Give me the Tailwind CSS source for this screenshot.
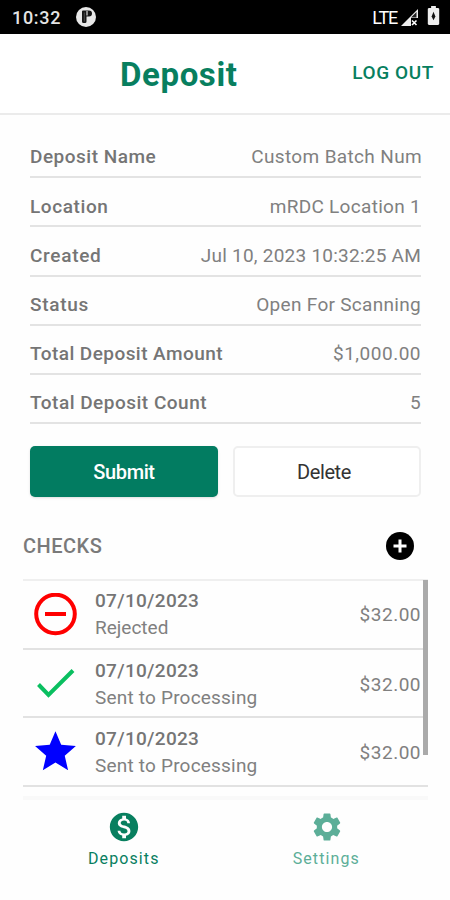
<!DOCTYPE html>
<html lang="en">
<head>
<meta charset="utf-8">
<title>Deposit</title>
<script src="https://cdn.jsdelivr.net/npm/@tailwindcss/browser@4"></script>
</head>
<body class="bg-[#fefefe] font-[Roboto,sans-serif]">
<div class="w-[450px] h-[900px] overflow-hidden flex flex-col text-[#757575] whitespace-nowrap">
  <header class="h-[34px] shrink-0 bg-black flex items-center pl-3 pr-[10px] text-[#e4e4e4]">
    <span class="w-[50px] text-[18px] font-medium tracking-[0.7px]">10:32</span>
    <svg class="ml-[14px] size-5" viewBox="0 0 20 20"><circle cx="10" cy="10" r="10" fill="#e8e8e8"/><path d="M6 4.500Q6 3.500 7 3.500H13Q16 3.500 16 6.500T13 9.500H10.500V14.500Q10.500 16 9 16H7.500Q6 16 6 14.500Z" fill="#161616"/><path d="M8.300 5.500v9" stroke="#555" stroke-width="0.800"/><path d="M11 4v4.500" stroke="#ddd" stroke-width="1.200"/></svg>
    <span class="ml-auto text-[18px] tracking-[-1.2px] text-white">LTE</span>
    <svg class="ml-[3px] w-[19px] h-[19px]" viewBox="0 0 19 19"><path d="M1 18 18 1V10H11V18Z" fill="#eee"/><path d="M11 9.500 16.500 4V9.500Z" fill="#222"/><path d="m12 12.500 4.500 4.500m0-4.500-4.500 4.500" stroke="white" stroke-width="1.600"/></svg>
    <svg class="ml-[8px] mb-[3px] w-[13px] h-[19px]" viewBox="0 0 12 20"><path d="M3.500 0h5v2H11l1 1v16l-1 1H1l-1-1V3l1-1h2.500Z" fill="#eee"/><path d="M6 6 4 11 6 15l2-4Z" fill="#111"/></svg>
  </header>
  <div class="h-[81px] shrink-0 bg-white border-b-2 border-[#ebebeb] relative flex items-center justify-end pr-[16px] text-[#087f5f]">
    <h1 class="absolute left-[120px] top-[16px] text-[33px] leading-[50px] font-bold tracking-[0.6px]">Deposit</h1>
    <span class="text-[19px] font-medium tracking-[0.6px]">LOG OUT</span>
  </div>
  <dl class="mt-[14px] ml-[30px] w-[391px] text-[19px] shrink-0 tracking-[0.3px]">
    <div class="h-[49.200px] pt-[10px] border-b-2 border-[#e3e3e3] flex items-center justify-between"><dt class="font-medium tracking-[0.5px]">Deposit Name</dt><dd class="text-[#808080] -mr-px tracking-[0.35px]">Custom Batch Num</dd></div>
    <div class="h-[49.200px] pt-[10px] border-b-2 border-[#e3e3e3] flex items-center justify-between"><dt class="font-medium tracking-[0.6px]">Location</dt><dd class="text-[#808080]">mRDC Location 1</dd></div>
    <div class="h-[49.200px] pt-[10px] border-b-2 border-[#e3e3e3] flex items-center justify-between"><dt class="font-medium tracking-[0.7px]">Created</dt><dd class="text-[#808080] tracking-[0.24px]">Jul 10, 2023 10:32:25 AM</dd></div>
    <div class="h-[49.200px] pt-[10px] border-b-2 border-[#e3e3e3] flex items-center justify-between"><dt class="font-medium tracking-[0.7px]">Status</dt><dd class="text-[#808080]">Open For Scanning</dd></div>
    <div class="h-[49.200px] pt-[10px] border-b-2 border-[#e3e3e3] flex items-center justify-between"><dt class="font-medium tracking-[0.44px]">Total Deposit Amount</dt><dd class="text-[#808080] tracking-[0.5px]">$1,000.00</dd></div>
    <div class="h-[49.200px] pt-[10px] border-b-2 border-[#e3e3e3] flex items-center justify-between"><dt class="font-medium tracking-[0.5px]">Total Deposit Count</dt><dd class="text-[#808080]">5</dd></div>
  </dl>
  <div class="mt-[22px] ml-[30px] w-[391px] h-[51px] shrink-0 grid grid-cols-2 gap-[15px] text-[20px]">
    <button class="rounded-[5px] bg-[#027c61] text-white shadow-sm font-medium tracking-[-0.4px] pt-px">Submit</button>
    <button class="rounded-[5px] bg-white border-2 border-[#efefef] text-[#333] tracking-[-0.4px] pr-[6px]">Delete</button>
  </div>
  <div class="h-[82px] shrink-0 pl-[23px] pr-[36px] pt-[16px] flex items-center justify-between">
    <h2 class="text-[20px] font-medium text-[#7a7a7a] tracking-[0.5px]">CHECKS</h2>
    <svg class="size-7" viewBox="0 0 28 28"><circle cx="14" cy="14" r="14" fill="#000"/><path d="M14 7.500v13M7.500 14h13" stroke="#fff" stroke-width="3"/></svg>
  </div>
  <div class="relative ml-[23px] w-[405px] h-[221px] shrink-0 border-t-2 border-[#efefef] border-b-4 border-b-[#f9f9f9]">
    <div class="h-[68.500px] border-b-2 border-[#e2e2e2] flex items-center pl-[11px] pr-[7px]">
      <svg class="size-[43px]" viewBox="0 0 43 43" fill="none" stroke="#f00" stroke-width="4"><circle cx="21.500" cy="21" r="19.300"/><path d="M11 21h21"/></svg>
      <div class="ml-[18px] leading-[27px] text-[19px]"><p class="font-medium tracking-[0.3px]">07/10/2023</p><p class="text-[#808080]">Rejected</p></div><span class="ml-auto pt-[2px] text-[19px] tracking-[0.5px] text-[#808080]">$32.00</span>
    </div>
    <div class="h-[68.500px] pt-[2px] border-b-2 border-[#e2e2e2] flex items-center pl-[11px] pr-[7px]">
      <svg class="size-[43px]" viewBox="0 0 43 43" fill="none" stroke="#0abf60" stroke-width="4"><path d="M4.500 22.500 14.500 33 39 8.500"/></svg>
      <div class="ml-[18px] leading-[27px] text-[19px]"><p class="font-medium tracking-[0.3px]">07/10/2023</p><p class="text-[#808080] tracking-[0.2px]">Sent to Processing</p></div><span class="ml-auto pt-[2px] text-[19px] tracking-[0.5px] text-[#808080]">$32.00</span>
    </div>
    <div class="h-[68.500px] pt-[2px] border-b-2 border-[#e2e2e2] flex items-center pl-[11px] pr-[7px]">
      <svg class="size-[43px]" viewBox="0 0 24 24" fill="#00f"><path d="M12 17.270 18.180 21l-1.640-7.030L22 9.240l-7.190-.610L12 2 9.190 8.630 2 9.240l5.460 4.730L5.820 21z" transform="translate(-1.700 -2.100) scale(1.140)"/></svg>
      <div class="ml-[18px] leading-[27px] text-[19px]"><p class="font-medium tracking-[0.3px]">07/10/2023</p><p class="text-[#808080] tracking-[0.2px]">Sent to Processing</p></div><span class="ml-auto pt-[2px] text-[19px] tracking-[0.5px] text-[#808080]">$32.00</span>
    </div>
    <div class="absolute right-0 top-[-1px] w-[5px] h-[175px] bg-[#aaa]"></div>
  </div>
  <nav class="h-[98px] ml-[23px] w-[405px] grid grid-cols-2 text-[16px] text-[#087f5f]">
    <div class="flex flex-col items-center pt-[10px]">
      <svg class="size-[34px]" viewBox="0 0 24 24" fill="currentColor"><path d="M12 2C6.480 2 2 6.480 2 12s4.480 10 10 10 10-4.480 10-10S17.520 2 12 2zm1.410 16.090V20h-2.670v-1.930c-1.710-.360-3.160-1.460-3.270-3.400h1.960c.1 1.050.820 1.870 2.650 1.870 1.960 0 2.400-.980 2.400-1.590 0-.830-.440-1.610-2.670-2.140-2.480-.6-4.180-1.620-4.180-3.670 0-1.720 1.390-2.840 3.110-3.210V4h2.670v1.950c1.860.450 2.790 1.860 2.850 3.390H14.300c-.050-1.110-.640-1.870-2.220-1.870-1.500 0-2.400.680-2.400 1.640 0 .840.650 1.390 2.670 1.910s4.180 1.390 4.180 3.910c-.010 1.830-1.380 2.830-3.120 3.160z"/></svg>
      <span class="mt-[3px] pr-[1px] tracking-[1.1px]">Deposits</span>
    </div>
    <div class="flex flex-col items-center pt-[10px] text-[#5cae98]">
      <svg class="size-[34px]" viewBox="0 0 24 24" fill="currentColor"><path d="M19.140 12.940c.040-.3.060-.610.060-.940 0-.320-.020-.640-.070-.940l2.030-1.580c.180-.140.230-.410.120-.610l-1.920-3.320c-.120-.220-.370-.290-.590-.220l-2.390.960c-.5-.380-1.030-.7-1.620-.940l-.360-2.540c-.040-.240-.240-.410-.480-.410h-3.840c-.240 0-.430.170-.470.410l-.360 2.540c-.590.240-1.130.570-1.620.940l-2.390-.960c-.220-.080-.470 0-.590.220L2.740 8.870c-.120.210-.080.470.120.610l2.030 1.580c-.050.3-.090.630-.090.940s.020.640.070.940l-2.030 1.580c-.180.140-.230.410-.120.610l1.920 3.320c.120.220.370.290.590.220l2.390-.960c.5.380 1.030.7 1.620.940l.360 2.540c.050.240.240.410.480.410h3.840c.240 0 .440-.170.470-.410l.360-2.540c.590-.240 1.130-.560 1.620-.940l2.390.960c.220.080.470 0 .590-.220l1.920-3.320c.120-.220.070-.470-.120-.610l-2.010-1.580zM12 15.600c-1.980 0-3.600-1.620-3.600-3.600s1.620-3.600 3.600-3.600 3.600 1.620 3.600 3.600-1.620 3.600-3.600 3.600z"/></svg>
      <span class="mt-[3px] pr-[1px] tracking-[1.1px]">Settings</span>
    </div>
  </nav>
</div>
</body>
</html>
